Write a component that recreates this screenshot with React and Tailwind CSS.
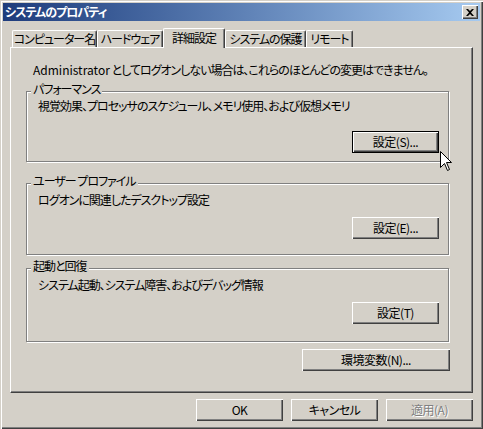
import React from "react";

const raised =
  "shadow-[inset_1px_1px_#fff,inset_-1px_-1px_#404040,inset_-2px_-2px_#808080]";

function Btn({ children, w = "w-[87px]", focused, disabled }) {
  return (
    <button
      className={
        focused
          ? `flex h-[22px] ${w} items-center justify-center whitespace-nowrap border border-black bg-[#d4d0c8] leading-none tracking-[-0.5px] text-black ${raised}`
          : disabled
          ? `flex h-[22px] ${w} items-center justify-center whitespace-nowrap bg-[#d4d0c8] leading-none tracking-[-0.5px] text-[#808080] [text-shadow:1px_1px_0_#fff] ${raised}`
          : `flex h-[22px] ${w} items-center justify-center whitespace-nowrap bg-[#d4d0c8] leading-none tracking-[-0.5px] text-black ${raised}`
      }
    >
      {children}
    </button>
  );
}

function Group({ title, text, className, textPad, btnGap, button }) {
  return (
    <div
      className={`relative ml-[15px] w-[423px] border border-[#808080] shadow-[inset_1px_1px_#fff,1px_1px_#fff] ${className}`}
    >
      <span className="absolute left-[4px] top-[-9px] whitespace-nowrap bg-[#d4d0c8] px-[2px] leading-[12px]">
        {title}
      </span>
      <div className={`whitespace-nowrap pl-[11px] leading-[12px] ${textPad}`}>{text}</div>
      <div className={`flex justify-end pr-[9px] ${btnGap}`}>{button}</div>
    </div>
  );
}

const tabs = [
  { label: "コンピューター名", w: "w-[85px]" },
  { label: "ハードウェア", w: "w-[66px]" },
  { label: "詳細設定", w: "w-[62px]", active: true },
  { label: "システムの保護", w: "w-[81px]" },
  { label: "リモート", w: "w-[47px]" },
];

export default function App() {
  return (
    <div className="relative h-[429px] w-[483px] bg-[#d4d0c8] p-[3px] font-['Noto_Sans_CJK_JP',sans-serif] text-[12px] tracking-[-1px] text-black [font-feature-settings:'palt'] shadow-[inset_1px_1px_#d4d0c8,inset_2px_2px_#fff,inset_-1px_-1px_#404040,inset_-2px_-2px_#808080]">
      {/* title bar */}
      <div className="flex h-[18px] items-center justify-between bg-gradient-to-r from-[#1e3c7c] to-[#a6caf0] pl-[2px] pr-[2px]">
        <span className="whitespace-nowrap font-bold leading-none text-white">システムのプロパティ</span>
        <button className={`flex h-[14px] w-[16px] items-center justify-center bg-[#d4d0c8] ${raised}`}>
          <svg width="8" height="7" viewBox="0 0 8 7">
            <path d="M0 0h2l2 2 2-2h2L5 3.5 8 7H6L4 5 2 7H0l3-3.5z" fill="#000" />
          </svg>
        </button>
      </div>

      <div className="px-[7px]">
        {/* tabs */}
        <div className="mt-[7px] flex h-[19px] items-end pl-[2px]">
          {tabs.map((t) =>
            t.active ? (
              <div
                key={t.label}
                className={`relative z-10 mb-[-1px] flex h-[20px] ${t.w} items-center justify-center whitespace-nowrap rounded-t-[2px] border-l border-t border-r border-white border-r-[#404040] bg-[#d4d0c8] pb-[2px] shadow-[inset_-1px_0_#808080]`}
              >
                {t.label}
              </div>
            ) : (
              <div
                key={t.label}
                className={`flex h-[17px] ${t.w} items-center justify-center whitespace-nowrap rounded-t-[2px] border-l border-t border-r border-white border-r-[#404040] shadow-[inset_-1px_0_#808080]`}
              >
                {t.label}
              </div>
            )
          )}
        </div>

        {/* panel */}
        <div className="h-[346px] border border-white border-r-[#404040] border-b-[#404040] shadow-[inset_-1px_-1px_#808080]">
          <div className="whitespace-nowrap pl-[22px] pt-[14px] leading-[16px]">
            <span className="tracking-normal">Administrator</span> としてログオンしない場合は、これらのほとんどの変更はできません。
          </div>

          <Group
            className="mt-[13px] h-[71px]"
            title="パフォーマンス"
            text="視覚効果、プロセッサのスケジュール、メモリ使用、および仮想メモリ"
            textPad="pt-[8px]"
            btnGap="mt-[19px]"
            button={<Btn focused>設定(S)...</Btn>}
          />

          <Group
            className="mt-[21px] h-[72px]"
            title="ユーザー プロファイル"
            text="ログオンに関連したデスクトップ設定"
            textPad="pt-[10px]"
            btnGap="mt-[11px]"
            button={<Btn>設定(E)...</Btn>}
          />

          <Group
            className="mt-[13px] h-[74px]"
            title="起動と回復"
            text="システム起動、システム障害、およびデバッグ情報"
            textPad="pt-[10px]"
            btnGap="mt-[11px]"
            button={<Btn>設定(T)</Btn>}
          />

          <div className="ml-[15px] mt-[7px] flex w-[424px] justify-end">
            <Btn w="w-[148px]">環境変数(N)...</Btn>
          </div>
        </div>

        {/* bottom buttons */}
        <div className="mt-[6px] flex justify-end gap-[8px]">
          <Btn>OK</Btn>
          <Btn>キャンセル</Btn>
          <Btn disabled>適用(A)</Btn>
        </div>
      </div>

      {/* mouse cursor */}
      <svg
        className="absolute left-[440px] top-[151px]"
        width="13"
        height="21"
        viewBox="0 0 13 21"
      >
        <path
          d="M0.5 0.5V16.5L4.5 12.5L7.5 19.5L9.5 18.5L6.5 11.5H11.5Z"
          fill="#fff"
          stroke="#000"
          strokeWidth="1"
          strokeLinejoin="miter"
        />
      </svg>
    </div>
  );
}
